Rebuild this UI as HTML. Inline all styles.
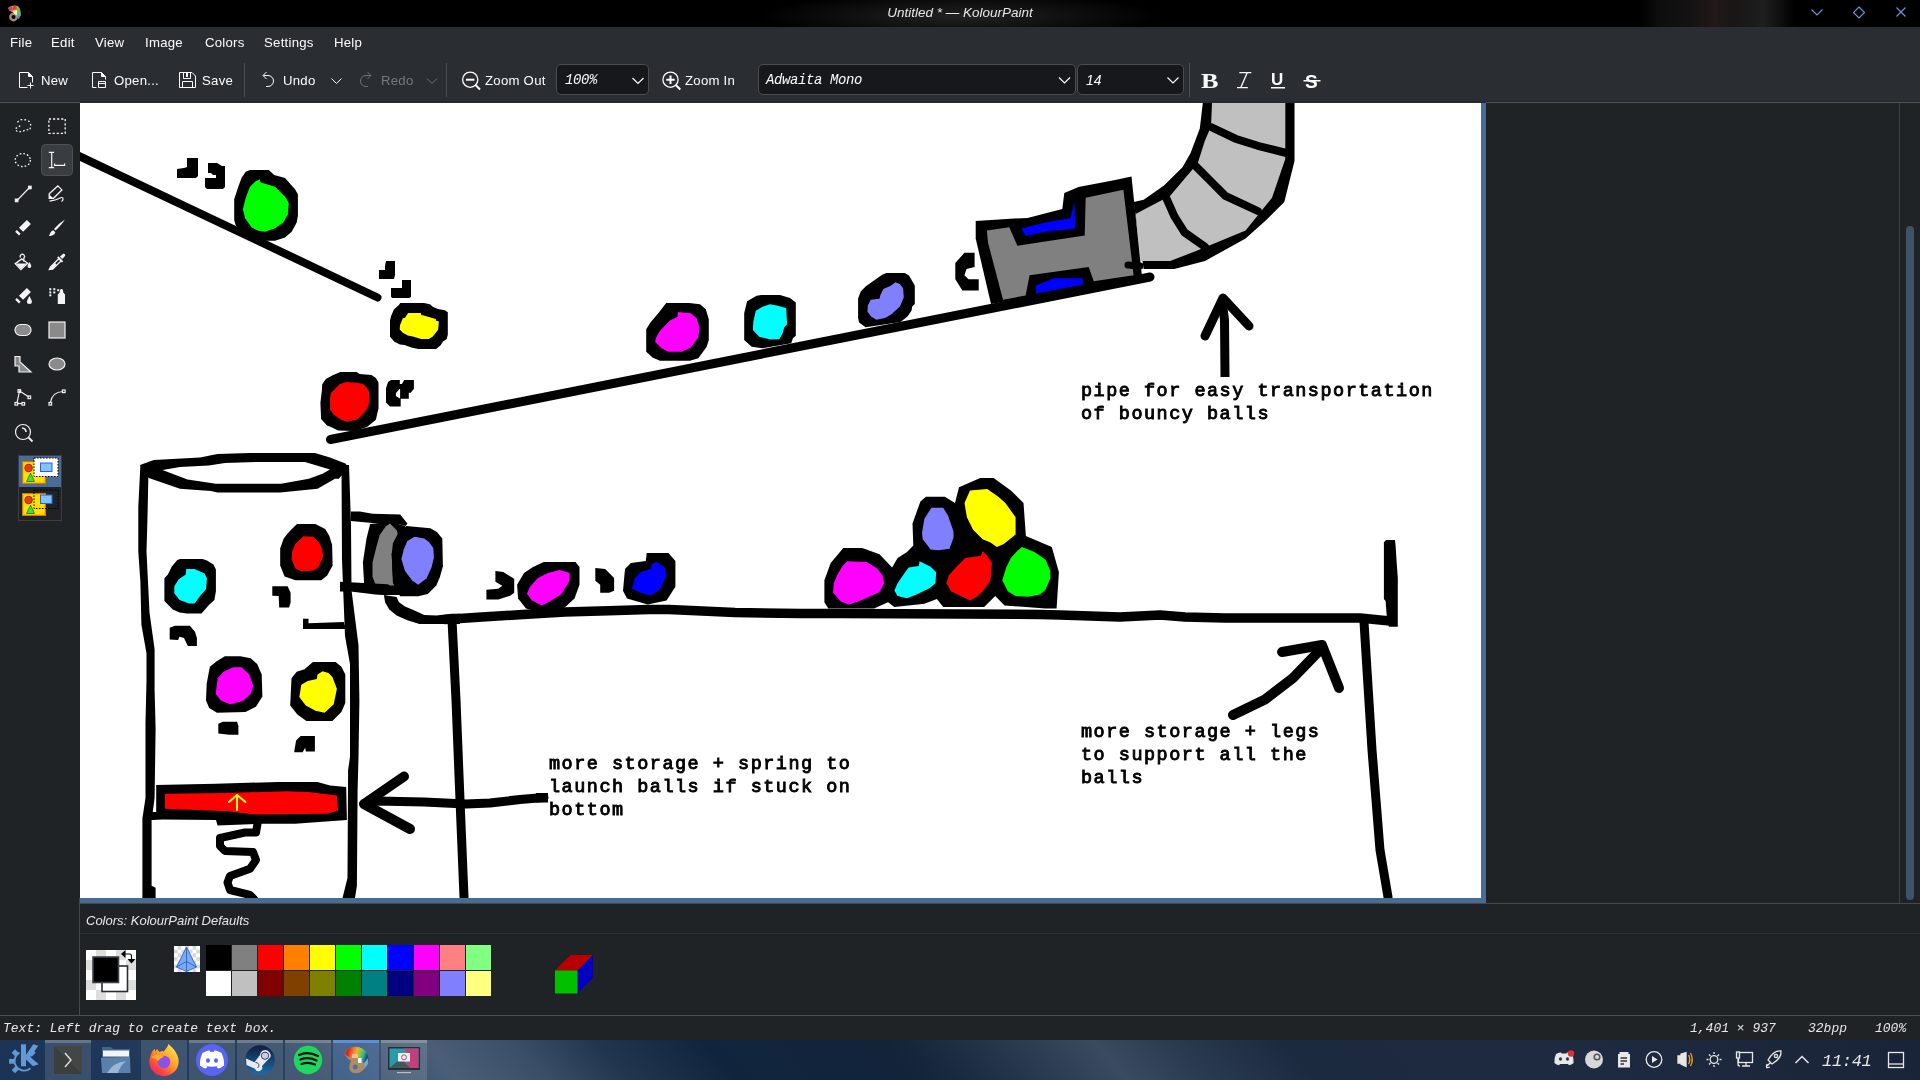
<!DOCTYPE html>
<html><head><meta charset="utf-8">
<style>
*{margin:0;padding:0;box-sizing:border-box}
html,body{width:1920px;height:1080px;overflow:hidden;background:#202326;font-family:"Liberation Sans",sans-serif;color:#fcfcfc}
.a{position:absolute}
.t{position:absolute;white-space:nowrap;font-size:14px;line-height:16px;will-change:transform}
#title{left:0;top:0;width:1920px;height:27px;background:#000}
#menu{left:0;top:27px;width:1920px;height:30px;background:#2a2e32}
#tool{left:0;top:57px;width:1920px;height:45px;background:#2a2e32;border-bottom:1px solid #25282c}
.combo{position:absolute;background:#17181b;border:1px solid #494d52;border-radius:5px}
.sep{position:absolute;width:1px;background:#4a4e52}
</style></head><body>
<div id="title" class="a">
  <div class="a" style="left:760px;top:0;width:400px;height:27px;background:radial-gradient(ellipse 50% 90% at 50% 60%,#222 0%,#111 50%,#000 100%)"></div>
  <div class="t" style="left:0;width:1920px;text-align:center;top:5px;font-style:italic;font-size:13.5px;color:#e6e6e6">Untitled * — KolourPaint</div>
</div>
<div id="menu" class="a">
  <div class="t" style="left:10px;top:8px;font-size:13.2px;letter-spacing:0.25px">File</div>
  <div class="t" style="left:51px;top:8px;font-size:13.2px;letter-spacing:0.25px">Edit</div>
  <div class="t" style="left:95px;top:8px;font-size:13.2px;letter-spacing:0.25px">View</div>
  <div class="t" style="left:145px;top:8px;font-size:13.2px;letter-spacing:0.25px">Image</div>
  <div class="t" style="left:205px;top:8px;font-size:13.2px;letter-spacing:0.25px">Colors</div>
  <div class="t" style="left:264px;top:8px;font-size:13.2px;letter-spacing:0.25px">Settings</div>
  <div class="t" style="left:334px;top:8px;font-size:13.2px;letter-spacing:0.25px">Help</div>
</div>
<div id="tool" class="a">
  <div class="t" style="left:41px;top:16px;font-size:13.2px;letter-spacing:0.25px">New</div>
  <div class="t" style="left:114px;top:16px;font-size:13.2px;letter-spacing:0.25px">Open...</div>
  <div class="t" style="left:202px;top:16px;font-size:13.2px;letter-spacing:0.25px">Save</div>
  <div class="sep" style="left:244px;top:6px;height:34px"></div>
  <div class="t" style="left:283px;top:16px;font-size:13.2px;letter-spacing:0.25px">Undo</div>
  <div class="t" style="left:381px;top:16px;font-size:13.2px;letter-spacing:0.25px;color:#75787c">Redo</div>
  <div class="sep" style="left:446px;top:6px;height:34px"></div>
  <div class="t" style="left:485px;top:16px;font-size:13.2px;letter-spacing:0.25px">Zoom Out</div>
  <div class="combo" style="left:556px;top:7px;width:93px;height:31px"></div>
  <div class="t" style="left:685px;top:16px;font-size:13.2px;letter-spacing:0.25px">Zoom In</div>
  <div class="combo" style="left:758px;top:7px;width:318px;height:31px"></div>
  <div class="combo" style="left:1077px;top:7px;width:107px;height:31px"></div>
  <div class="sep" style="left:1189px;top:6px;height:34px"></div>
  <div class="t" style="left:565px;top:15px;font-family:'Liberation Mono',monospace;font-style:italic;font-size:14px;letter-spacing:-0.4px">100%</div>
  <div class="t" style="left:766px;top:15px;font-family:'Liberation Mono',monospace;font-style:italic;font-size:14px;letter-spacing:-0.4px">Adwaita Mono</div>
  <div class="t" style="left:1086px;top:15px;font-style:italic;font-size:14px">14</div>
</div>
<div class="a" style="left:0;top:102px;width:80px;height:1px;background:#4f5358"></div>
<div class="a" style="left:80px;top:102px;width:1406px;height:1px;background:#26292d"></div>
<div class="a" style="left:1486px;top:102px;width:434px;height:1px;background:#4f5358"></div>
<!-- left tool panel -->
<div class="a" style="left:0;top:103px;width:80px;height:800px;background:#202326"></div>
<!-- canvas -->
<div class="a" style="left:80px;top:103px;width:1401px;height:795px;background:#fff;overflow:hidden"></div>
<svg class="a" style="left:0;top:0;will-change:transform" width="1920" height="1080" viewBox="0 0 1920 1080"><defs><clipPath id="cv"><rect x="80" y="103" width="1401" height="795"/></clipPath></defs><g clip-path="url(#cv)"><polyline points="78.0,155.5 377.5,297.5" fill="none" stroke="#000" stroke-width="8" stroke-linecap="round" stroke-linejoin="round"/>
<polygon points="187.0,158.0 198.0,158.0 198.0,176.0 196.0,178.0 177.0,178.0 177.0,169.0 184.0,168.0 187.0,167.0" fill="#000" />
<polygon points="208.0,163.0 217.0,163.0 222.0,166.0 225.0,166.0 225.0,187.0 223.0,189.0 207.0,189.0 205.0,187.0 205.0,178.0 216.0,178.0 216.0,175.0 213.0,175.0 211.0,173.0 208.0,173.0" fill="#000" />
<polygon points="250.0,170.0 268.8,170.0 274.2,175.0 285.0,177.9 295.0,189.2 297.9,194.2 297.9,215.8 296.7,222.5 291.7,231.7 285.0,237.5 275.0,240.8 260.0,240.8 250.0,237.5 235.8,225.8 234.2,220.0 234.2,199.2 238.3,186.7 241.7,177.5 245.8,171.7" fill="#000" />
<polygon points="259.6,179.2 260.8,182.5 275.0,186.7 285.8,197.5 288.8,203.3 287.9,214.2 283.3,222.5 275.0,228.3 265.0,231.7 258.3,230.8 251.7,227.5 245.0,218.3 242.9,209.2 245.8,197.5 250.0,186.7 255.0,181.7" fill="#00ff00" />
<polygon points="386.0,261.0 395.0,261.0 395.0,275.0 394.0,279.0 379.0,279.0 379.0,270.0 385.0,270.0 385.0,266.0" fill="#000" />
<polygon points="402.0,280.0 411.0,280.0 411.0,297.0 409.0,298.0 392.0,298.0 391.0,296.5 391.0,288.0 402.0,288.0" fill="#000" />
<polygon points="400.3,303.1 423.9,303.1 430.0,304.2 432.8,306.7 437.8,308.9 445.0,310.3 447.8,312.2 447.8,334.7 446.7,338.9 442.8,341.7 440.6,345.3 436.1,348.9 418.3,348.9 412.2,347.8 404.4,345.0 400.0,344.4 394.4,341.7 390.0,336.7 390.0,320.6 391.1,316.1 393.9,309.4 398.9,305.0" fill="#000" />
<polygon points="408.1,313.1 420.8,313.1 421.1,314.7 435.8,318.9 436.1,320.8 438.9,321.4 438.1,329.7 432.8,336.4 428.9,338.9 421.1,338.9 412.8,336.4 407.8,335.6 402.8,332.8 399.7,329.4 400.0,325.3 402.8,318.3 405.0,317.8" fill="#ffff00" />
<polyline points="330.5,439.5 1150.0,277.0" fill="none" stroke="#000" stroke-width="9" stroke-linecap="round" stroke-linejoin="round"/>
<polygon points="340.4,372.0 356.7,372.0 359.6,373.9 371.5,375.0 375.9,378.0 378.5,382.4 378.5,408.7 377.4,413.1 375.9,419.8 372.2,422.8 367.0,426.9 354.4,430.9 338.1,430.6 331.5,427.2 327.0,425.4 321.1,419.1 320.4,402.8 321.9,390.2 322.2,384.3 325.9,379.1 332.2,375.4" fill="#000" />
<polygon points="346.3,382.0 356.7,382.8 363.0,383.9 366.3,386.9 368.9,390.9 369.6,399.8 368.1,406.9 364.4,412.4 357.4,419.4 347.0,421.7 341.1,419.8 333.7,414.6 330.0,409.4 330.0,398.3 331.1,392.8 336.7,387.2 339.6,384.3" fill="#ff0000" />
<path fill-rule="evenodd" d="M391.2,380 L399.8,380 L399.8,383.9 L402,383.9 L404.1,380 L413.9,380 L413.9,388.8 L410.8,392.7 L408.8,392.7 L408.8,398.8 L400.7,398.8 L400.7,406.6 L390,406.6 L386,402.6 L386,388.3 L388,382.1 Z M399.4,388.9 L395.9,393.2 L395.9,396.1 L399.4,398.2 L400.1,398.2 L400.1,388.9 Z" fill="#000"/>
<polygon points="666.2,302.9 689.2,302.9 700.0,304.2 705.8,309.2 708.8,319.2 708.8,340.0 706.7,346.7 698.3,358.3 690.0,360.8 660.0,360.8 652.5,357.5 646.2,351.7 646.2,329.2 650.4,322.5 658.3,313.3 663.3,306.7" fill="#000" />
<polygon points="677.9,312.1 690.8,313.3 696.7,318.3 699.6,328.3 698.3,337.5 690.8,347.5 681.7,351.7 668.3,351.7 661.7,348.3 655.0,341.7 656.2,337.5 660.0,330.8 670.0,320.4 677.5,316.7" fill="#ff00ff" />
<polygon points="761.2,295.0 780.0,295.0 790.0,297.9 795.8,302.5 795.8,335.8 792.9,338.3 791.2,343.3 762.5,348.3 751.7,346.7 744.2,340.0 744.2,313.3 747.1,301.2 756.7,295.8" fill="#000" />
<polygon points="770.0,304.2 776.7,305.4 786.2,307.9 787.1,324.2 784.2,327.5 782.5,333.8 779.2,339.2 770.8,339.6 759.2,336.7 752.9,330.0 753.3,321.7 755.8,310.8 762.5,306.7" fill="#00ffff" />
<polygon points="886.3,273.1 904.8,273.1 909.0,275.4 911.9,280.6 914.8,285.4 914.8,303.9 912.2,306.5 911.6,310.4 907.7,316.2 901.2,321.4 900.6,322.0 865.6,327.2 859.1,322.4 858.1,318.1 858.1,298.4 860.7,291.6 865.6,286.4 873.3,280.9 881.8,275.0" fill="#000" />
<polygon points="895.4,282.2 899.9,284.1 903.1,288.3 903.8,297.4 899.9,306.5 891.5,314.3 885.0,318.1 876.6,319.8 871.4,316.8 867.5,311.7 867.8,305.8 870.7,299.7 879.5,298.7 880.5,294.8 883.4,289.0 890.8,285.7" fill="#8080ff" />
<polygon points="964.4,252.8 974.6,252.8 974.6,267.1 966.5,269.1 964.4,275.2 968.5,279.3 978.7,279.3 978.7,290.5 962.4,290.5 955.3,279.3 955.3,263.0" fill="#000" />
<polygon points="1202.8,103.0 1199.8,128.5 1190.6,153.0 1182.5,167.2 1164.0,185.6 1143.7,199.8 1133.6,202.0 1143.7,269.0 1174.3,269.0 1205.0,261.0 1245.6,238.5 1266.0,220.2 1284.3,201.9 1294.5,161.0 1294.5,103.0" fill="#000" />
<polygon points="1212.0,103.0 1211.0,126.5 1204.9,140.7 1197.7,163.2 1170.2,195.8 1135.6,214.0 1140.7,261.0 1170.2,261.0 1196.7,250.8 1245.6,230.4 1272.0,197.8 1285.3,159.0 1285.3,103.0" fill="#c0c0c0" />
<polyline points="1212.0,127.5 1235.4,138.7 1257.8,145.8 1286.4,153.0" fill="none" stroke="#000" stroke-width="8" stroke-linecap="round" stroke-linejoin="round"/>
<polyline points="1194.7,165.2 1211.0,181.5 1225.3,195.8 1257.8,211.0" fill="none" stroke="#000" stroke-width="8" stroke-linecap="round" stroke-linejoin="round"/>
<polyline points="1166.2,197.8 1174.3,216.1 1184.5,232.4 1204.9,246.7" fill="none" stroke="#000" stroke-width="8" stroke-linecap="round" stroke-linejoin="round"/>
<polygon points="975.7,221.0 1014.4,218.5 1027.6,218.0 1062.3,209.0 1064.3,193.0 1078.5,187.0 1115.2,180.0 1131.5,176.5 1142.0,277.0 991.0,304.0 975.7,238.5" fill="#000" />
<polygon points="986.9,230.4 1009.3,227.3 1017.4,245.7 1084.7,235.5 1085.7,197.8 1123.4,189.7 1133.6,275.2 1093.8,281.3 1088.7,267.0 1029.6,275.2 1025.6,295.6 1003.0,299.7 988.0,242.6" fill="#808080" />
<polygon points="1021.5,228.4 1046.0,222.2 1070.4,218.2 1074.5,201.9 1075.5,228.4 1046.0,231.4 1025.6,236.1" fill="#0000ff" />
<polygon points="1035.8,285.4 1054.0,278.3 1082.6,278.3 1083.6,284.4 1035.8,293.6" fill="#0000ff" />
<polyline points="1128.0,265.0 1140.0,266.0" fill="none" stroke="#000" stroke-width="7" stroke-linecap="round" stroke-linejoin="round"/>
<path d="M1225,377 L1224.5,320 L1222,300" fill="none" stroke="#000" stroke-width="9"/>
<polyline points="1205.0,336.0 1223.0,298.0 1249.0,326.0" fill="none" stroke="#000" stroke-width="9" stroke-linecap="round" stroke-linejoin="round"/>
<polygon points="140.0,465.0 153.8,460.0 200.0,457.5 217.5,454.0 249.4,453.0 315.0,453.0 330.0,457.5 346.0,463.8 347.5,468.8 338.8,478.8 335.0,478.8 317.5,488.8 280.0,492.5 217.5,492.5 211.0,491.0 180.0,488.8 148.8,478.0" fill="#000" />
<polygon points="162.5,470.0 180.0,466.9 208.8,465.6 225.0,463.0 257.5,462.0 305.0,462.0 330.0,469.4 322.5,473.8 308.8,478.8 281.2,483.8 216.0,483.8 187.5,479.4" fill="#fff" />
<polygon points="140.4,465.0 148.5,470.0 147.5,516.8 146.5,551.5 149.5,612.6 154.6,649.2 154.6,690.0 155.6,728.9 154.6,798.0 151.6,820.5 151.6,885.7 155.6,887.7 155.6,898.0 142.4,898.0 142.4,818.5 145.5,798.0 145.5,722.8 146.5,680.0 146.5,653.3 141.4,624.8 140.4,582.0 138.3,551.5 138.3,506.7" fill="#000" />
<polygon points="341.5,465.0 342.0,560.0 345.0,636.0 350.0,664.0 350.0,756.7 348.1,770.0 347.5,878.0 342.5,898.0 355.0,898.0 356.9,886.0 357.6,790.0 358.5,756.7 359.4,701.0 358.5,645.5 351.5,590.0 351.0,525.0 349.0,465.0" fill="#000" />
<polygon points="297.0,523.9 315.3,523.9 325.2,528.9 329.2,535.8 332.1,544.7 332.6,565.5 327.2,575.4 321.3,580.3 295.5,580.3 284.6,576.4 280.2,565.5 280.2,548.6 283.6,538.8 286.6,534.8 291.1,529.8" fill="#000" />
<polygon points="303.4,536.3 313.3,536.8 319.3,542.7 322.2,549.6 323.2,556.6 318.3,567.4 313.3,570.4 301.5,571.4 295.5,568.4 291.6,559.5 292.1,551.6 295.5,543.7" fill="#ff0000" />
<polygon points="180.2,559.0 202.5,559.0 207.0,560.5 213.4,564.5 215.9,569.4 215.9,591.2 214.4,600.1 208.9,605.1 201.5,613.5 186.7,613.5 179.7,612.5 172.8,609.5 164.4,601.1 164.4,578.3 167.9,574.4 171.8,566.5 177.3,560.0" fill="#000" />
<polygon points="186.2,568.9 194.6,568.9 204.5,573.4 207.0,578.3 206.0,589.2 200.0,596.1 194.6,603.6 189.1,603.6 179.7,600.1 174.3,593.2 174.3,586.3 178.8,579.3 185.7,574.4" fill="#00ffff" />
<polygon points="272.3,586.3 287.6,586.3 290.6,592.7 290.6,602.6 289.1,607.5 279.2,607.5 278.7,596.1 272.3,595.7" fill="#000" />
<polygon points="224.8,656.3 240.4,656.3 250.7,658.2 257.2,664.1 261.7,674.4 262.4,696.5 255.9,706.8 245.5,712.0 217.0,712.7 209.2,708.1 206.0,700.4 206.7,683.5 209.9,666.7 216.4,661.5" fill="#000" />
<polygon points="233.2,667.3 241.6,667.3 249.4,674.4 253.3,686.1 250.7,693.9 242.9,701.0 230.0,704.2 220.9,700.4 215.7,693.9 217.7,678.3 223.5,671.8" fill="#ff00ff" />
<polygon points="312.9,662.1 335.6,662.1 341.4,666.7 345.3,674.4 345.3,702.9 341.4,712.0 332.4,721.1 306.4,721.1 297.4,714.6 290.2,705.5 291.5,678.3 296.7,671.8 304.5,669.2" fill="#000" />
<polygon points="322.6,671.2 328.5,673.1 332.4,677.0 336.9,688.7 333.7,704.2 324.6,712.7 315.5,710.7 305.8,705.5 299.3,697.1 301.3,684.8 307.7,680.9 316.8,679.0 317.5,674.4" fill="#ffff00" />
<polygon points="169.7,627.8 174.9,625.8 189.8,625.8 195.0,631.7 196.9,638.1 196.9,645.9 187.9,645.9 184.0,638.1 179.4,636.8 178.1,640.1 169.7,639.4" fill="#000" />
<polygon points="218.3,723.7 222.9,721.7 237.1,721.7 238.4,726.3 238.4,734.7 229.3,734.7 218.3,733.4" fill="#000" />
<polygon points="294.1,752.2 296.1,740.5 300.6,736.0 314.9,736.0 314.9,751.5 305.8,751.5 305.2,747.7 302.6,752.2" fill="#000" />
<polygon points="303.0,618.7 308.5,618.7 308.5,623.3 343.7,622.0 346.0,629.0 303.0,629.0" fill="#000" />
<polygon points="156.2,785.0 180.0,784.4 216.0,783.8 277.5,781.9 317.5,781.9 330.0,785.6 346.2,786.9 346.9,820.0 295.0,823.8 262.5,823.8 217.5,825.6 216.0,820.0 162.5,819.4 152.5,820.0 145.0,820.0 145.0,812.0 156.2,812.0" fill="#000" />
<polygon points="165.0,793.8 225.0,793.0 286.2,791.2 308.8,791.9 336.9,795.6 338.1,810.6 327.5,813.8 255.0,814.4 227.5,811.2 165.0,808.8" fill="#ff0000" />
<polyline points="229.0,802.0 237.0,795.0 245.5,802.0" fill="none" stroke="#ffff00" stroke-width="2" stroke-linecap="round" stroke-linejoin="round"/>
<polyline points="237.0,796.0 237.0,810.0" fill="none" stroke="#ffff00" stroke-width="2" stroke-linecap="round" stroke-linejoin="round"/>
<polyline points="257.5,823.8 256.0,832.5 245.0,832.5 220.0,838.0 220.0,846.0 225.0,851.0 253.0,852.0 256.0,860.0 250.0,868.8 230.0,876.0 227.5,882.5 230.0,890.0 250.0,895.0 254.0,899.0" fill="none" stroke="#000" stroke-width="8" stroke-linecap="round" stroke-linejoin="round"/>
<polygon points="350.8,511.4 359.9,511.4 372.5,513.8 400.2,514.4 407.4,523.5 405.6,525.9 397.8,524.1 372.5,522.9 350.8,521.1" fill="#000" />
<polygon points="370.1,524.1 390.5,521.7 405.0,525.9 407.4,536.1 405.0,595.1 385.7,595.1 371.3,593.9 364.1,583.0 362.9,562.6 366.5,538.5" fill="#000" />
<polygon points="389.9,523.5 396.6,530.1 397.8,533.7 392.9,543.3 391.7,554.2 392.9,577.0 397.8,585.4 376.1,585.4 372.5,577.0 372.5,562.6 376.1,548.1 379.7,534.9 385.7,526.5" fill="#808080" />
<polygon points="406.2,525.9 430.3,528.3 436.9,531.9 442.3,538.5 442.9,566.2 439.9,577.0 436.3,585.4 427.8,593.9 418.2,596.3 400.2,596.3 392.9,583.0 391.7,554.2 397.8,534.9" fill="#000" />
<polygon points="414.6,536.7 424.2,538.5 429.0,542.1 433.3,548.1 433.9,557.8 431.5,567.4 426.6,578.2 418.2,584.8 412.2,580.6 405.0,571.0 401.4,559.0 403.8,549.3 407.4,540.9" fill="#8080ff" />
<polygon points="340.0,581.8 364.1,583.0 388.1,584.2 400.2,595.1 385.7,595.1 371.3,593.9 350.8,591.5 340.0,591.5" fill="#000" />
<polygon points="383.9,595.1 396.6,596.9 399.0,602.3 405.0,606.5 413.4,610.1 424.2,614.9 436.3,615.5 451.9,613.7 460.0,613.7 460.0,623.9 419.4,623.9 407.4,620.3 396.6,615.5 389.3,609.5 385.1,602.3" fill="#000" />
<polyline points="445.0,619.5 482.0,617.0 523.0,614.5 565.0,612.0 617.0,610.5 648.0,609.5 669.0,609.5 735.0,612.5 800.0,613.5 840.0,613.5 957.0,614.0 1040.0,614.5 1060.0,615.0 1120.0,617.0 1160.0,615.0 1185.0,617.0 1225.0,618.0 1360.0,618.0 1390.0,621.0" fill="none" stroke="#000" stroke-width="9.5" stroke-linecap="round" stroke-linejoin="round"/>
<polygon points="1386.1,540.0 1395.0,540.0 1395.6,546.0 1396.7,562.8 1397.8,577.8 1397.8,626.7 1388.9,626.7 1386.7,615.6 1385.6,601.0 1383.9,599.0 1383.9,542.2" fill="#000" />
<polyline points="1364.0,622.0 1372.0,750.0 1380.0,850.0 1388.0,897.0" fill="none" stroke="#000" stroke-width="9" stroke-linecap="round" stroke-linejoin="round"/>
<polyline points="452.0,620.0 456.0,700.0 460.0,800.0 464.0,897.0" fill="none" stroke="#000" stroke-width="9" stroke-linecap="round" stroke-linejoin="round"/>
<polygon points="495.4,570.9 503.3,571.9 514.2,578.8 514.2,592.7 510.2,595.7 498.3,599.6 486.4,599.6 486.4,589.7 498.3,588.7 502.3,585.8 495.4,581.8" fill="#000" />
<polygon points="595.3,568.0 605.2,569.0 614.1,577.9 614.1,590.7 609.1,592.7 600.2,592.7 600.2,584.8 595.3,580.8" fill="#000" />
<polygon points="543.8,562.0 575.5,562.0 579.5,567.0 579.5,584.8 574.5,598.6 563.6,608.5 537.9,611.5 526.0,608.5 518.1,598.6 517.1,584.8 524.0,572.9 533.0,567.0" fill="#000" />
<polygon points="559.7,569.9 569.6,572.9 569.6,580.8 561.7,593.7 549.8,601.6 541.9,605.6 532.0,600.6 527.0,593.7 530.0,586.8 537.9,577.9 547.8,572.9" fill="#ff00ff" />
<polygon points="646.7,553.1 668.5,553.1 675.4,561.0 675.4,586.8 666.5,600.6 647.7,604.6 627.0,598.6 623.0,590.7 625.0,569.0 630.9,563.0 645.8,561.0" fill="#000" />
<polygon points="656.6,562.0 664.6,567.0 666.5,574.9 660.6,588.7 650.7,595.7 640.8,592.7 631.9,588.7 634.9,577.9 640.8,571.9 650.7,569.0 651.7,564.0" fill="#0000ff" />
<polygon points="824.4,580.2 830.7,562.9 843.3,547.9 862.2,547.9 879.5,554.2 892.1,567.6 897.6,558.1 907.0,551.9 913.3,545.6 912.5,523.5 920.4,501.5 925.9,496.8 944.8,496.8 955.0,503.1 959.0,487.3 980.2,477.9 993.6,477.9 1010.9,490.5 1023.5,503.1 1025.9,536.1 1051.8,547.1 1058.9,572.3 1056.6,608.5 1045.6,608.5 1004.6,605.4 995.2,595.9 984.2,606.9 943.2,606.9 936.9,599.1 924.4,603.8 894.4,606.9 888.1,602.2 874.0,608.5 828.3,608.5 824.4,602.2" fill="#000" />
<polygon points="847.2,561.3 866.9,562.1 877.1,568.4 882.6,575.5 884.2,583.3 879.5,592.0 869.3,596.7 858.2,601.4 848.8,604.6 840.9,601.4 833.1,592.8 833.8,583.3 837.8,573.9 842.5,566.0" fill="#ff00ff" />
<polygon points="919.6,561.3 930.6,566.8 936.2,572.3 935.4,583.3 929.9,588.1 916.5,594.4 907.0,598.3 897.6,595.9 894.4,590.4 897.6,583.3 903.9,573.9 908.6,567.6 918.8,566.0" fill="#00ffff" />
<polygon points="982.6,551.1 987.3,555.8 992.0,562.9 990.5,580.2 984.2,589.6 977.9,595.9 970.0,600.6 960.6,595.9 951.1,591.2 946.4,583.3 948.7,575.5 955.8,567.6 965.3,558.1 981.0,555.8" fill="#ff0000" />
<polygon points="1021.9,547.1 1034.5,551.9 1045.6,559.7 1050.3,570.7 1050.3,578.6 1045.6,589.6 1040.0,594.4 1028.2,596.7 1015.6,595.9 1007.8,591.2 1002.3,580.2 1006.2,567.6 1010.9,558.1 1017.2,551.1" fill="#00ff00" />
<polygon points="931.4,507.8 943.2,507.8 948.0,515.6 953.5,531.4 953.5,537.7 949.5,548.7 938.5,550.3 930.6,549.5 922.8,539.3 922.0,533.0 924.4,518.8" fill="#8080ff" />
<polygon points="970.0,490.5 987.3,488.9 998.3,496.8 1005.4,503.1 1015.6,517.2 1015.6,534.5 1007.8,540.8 1003.8,544.0 996.8,547.1 990.5,542.4 982.6,539.3 973.1,529.8 966.9,517.2 964.5,503.1" fill="#ffff00" />
<polyline points="544.0,797.5 520.0,799.5 490.0,803.0 466.0,804.0 424.0,802.0 377.0,801.0 364.0,803.5" fill="none" stroke="#000" stroke-width="9" stroke-linecap="round" stroke-linejoin="round"/>
<polygon points="536.0,793.0 548.0,793.0 548.0,802.5 536.0,802.5" fill="#000" />
<polyline points="404.0,776.5 364.0,804.0 410.0,829.0" fill="none" stroke="#000" stroke-width="10" stroke-linecap="round" stroke-linejoin="round"/>
<polyline points="1233.0,715.0 1265.0,699.5 1293.0,678.0 1322.0,648.0" fill="none" stroke="#000" stroke-width="10" stroke-linecap="round" stroke-linejoin="round"/>
<polyline points="1282.0,652.0 1322.0,645.0 1339.0,688.0" fill="none" stroke="#000" stroke-width="10" stroke-linecap="round" stroke-linejoin="round"/>
<text x="1081" y="396" font-family="Liberation Mono" font-size="18.5" letter-spacing="1.5" fill="#000" stroke="#000" stroke-width="0.9"><tspan x="1081" y="396" xml:space="preserve">pipe for easy transportation</tspan><tspan x="1081" y="419" xml:space="preserve">of bouncy balls</tspan></text>
<text x="549" y="769" font-family="Liberation Mono" font-size="18.5" letter-spacing="1.5" fill="#000" stroke="#000" stroke-width="0.9"><tspan x="549" y="769" xml:space="preserve">more storage + spring to</tspan><tspan x="549" y="792" xml:space="preserve">launch balls if stuck on</tspan><tspan x="549" y="815" xml:space="preserve">bottom</tspan></text>
<text x="1081" y="737.2" font-family="Liberation Mono" font-size="18.5" letter-spacing="1.5" fill="#000" stroke="#000" stroke-width="0.9"><tspan x="1081" y="737.2" xml:space="preserve">more storage + legs</tspan><tspan x="1081" y="760.2" xml:space="preserve">to support all the</tspan><tspan x="1081" y="783.2" xml:space="preserve">balls</tspan></text></g></svg>
<div class="a" style="left:1481px;top:103px;width:5px;height:800px;background:#4a6b95"></div>
<div class="a" style="left:80px;top:898px;width:1406px;height:5px;background:#4a6b95"></div>
<!-- right scrollbar -->
<div class="a" style="left:1899px;top:103px;width:1px;height:800px;background:#3c4045"></div>
<div class="a" style="left:1906px;top:226px;width:8px;height:674px;background:#3e5268;border-radius:4px"></div>
<!-- panel lines -->
<div class="a" style="left:80px;top:903px;width:1840px;height:1px;background:#45494e"></div>
<div class="a" style="left:79px;top:898px;width:1px;height:117px;background:#45494e"></div>
<div class="a" style="left:80px;top:933px;width:1840px;height:1px;background:#2e3236"></div>
<div class="t" style="left:86px;top:913px;font-style:italic;font-size:13px;color:#e8e8e8">Colors: KolourPaint Defaults</div>
<div class="a" style="left:0;top:1015px;width:1920px;height:1px;background:#4b4f54"></div>
<!-- status -->
<div class="t" style="left:3px;top:1021px;font-family:'Liberation Mono',monospace;font-style:italic;font-size:13px;color:#e8e8e8">Text: Left drag to create text box.</div>
<div class="t" style="left:1690px;top:1021px;font-family:'Liberation Mono',monospace;font-style:italic;font-size:13px;color:#e8e8e8">1,401 × 937</div>
<div class="t" style="left:1808px;top:1021px;font-family:'Liberation Mono',monospace;font-style:italic;font-size:13px;color:#e8e8e8">32bpp</div>
<div class="t" style="left:1875px;top:1021px;font-family:'Liberation Mono',monospace;font-style:italic;font-size:13px;color:#e8e8e8">100%</div>
<!-- taskbar -->
<div class="a" style="left:0;top:1040px;width:1920px;height:40px;background:linear-gradient(49deg,#1b3354 13px,#1e3658 89px,#2a4260 240px,#4a5e78 345px,#3a4e68 413px,#22364f 473px,#10253d 557px,#12233a 692px,#1c2c42 738px,#2e3e55 806px,#3a4a60 851px,#2a3a50 911px,#1c2a40 994px,#1e2a40 1221px,#1a2438 1462px)"></div>
<svg class="a" style="left:0;top:0;will-change:transform" width="1920" height="1080" viewBox="0 0 1920 1080">
<defs>
 <radialGradient id="tglow" cx="0.5" cy="0.5" r="0.5"><stop offset="0" stop-color="#1c1c1c"/><stop offset="1" stop-color="#000" stop-opacity="0"/></radialGradient>
 <linearGradient id="tglow2" x1="0" y1="0" x2="1" y2="0"><stop offset="0" stop-color="#000"/><stop offset="0.12" stop-color="#0d0d0d"/><stop offset="0.3" stop-color="#121212"/><stop offset="0.48" stop-color="#221818"/><stop offset="0.62" stop-color="#181616"/><stop offset="0.8" stop-color="#1e1e1e"/><stop offset="0.92" stop-color="#0c0c0c"/><stop offset="1" stop-color="#000"/></linearGradient>
</defs>
<!-- title glow -->
<rect x="1640" y="0" width="155" height="27" fill="url(#tglow2)"/>
<!-- app icon -->
<g transform="translate(7,4)">
 <circle cx="6.5" cy="13" r="3.2" fill="none" stroke="#b08a66" stroke-width="2.4"/>
 <path d="M1,4 Q5,0.5 11,2 Q14,5 13.5,12 L11,14 Q9,11 7,9 L3,7 Z" fill="#e88a3a"/>
 <path d="M1.5,4 L5,2.5 L6,6 L2,7 Z" fill="#c03ca0"/>
 <path d="M6,2 L9,1.5 L10,5 L6,6 Z" fill="#d84c1c"/>
 <path d="M9.5,3 L13,5 L13.5,9 L10,8 Z" fill="#6ac040"/>
 <path d="M10,8 L13.5,9 L13.5,12 L10,11 Z" fill="#40b8c8"/>
 <path d="M6,7 L10,6 L10,11 L7,10 Z" fill="#f0f0d0"/>
 <path d="M11,12 L13.5,11 L12,15 L10,14 Z" fill="#5a8ad0"/>
</g>
<!-- window controls -->
<g fill="none" stroke="#6a9cd8" stroke-width="1.1">
 <path d="M1811.5,9.5 L1817,15 L1822.5,9.5"/>
 <path d="M1859,7 L1864.5,12.5 L1859,18 L1853.5,12.5 Z"/>
 <path d="M1896.5,7.5 L1905.5,16.5 M1905.5,7.5 L1896.5,16.5"/>
</g>
<!-- toolbar icons -->
<g fill="none" stroke="#fcfcfc" stroke-width="1">
 <!-- new -->
 <path d="M19.5,72.5 H28.5 L32.5,76.5 V82.5 M27.5,87.5 H19.5 V72.5"/>
 <path d="M28.5,72.5 V76.5 H32.5" fill="#fcfcfc"/>
 <path d="M30.5,82.5 V88.5 M27.5,85.5 H33.5"/>
 <!-- open -->
 <path d="M92.5,72.5 H101.5 L105.5,76.5 V79.5 M96.5,87.5 H92.5 V72.5"/>
 <path d="M101.5,72.5 V76.5 H105.5" fill="#fcfcfc"/>
 <path d="M98.5,81.5 H105.5 V87.5 H98.5 Z M98.5,83.5 H105.5"/>
 <!-- save -->
 <path d="M179.5,72.5 H192 L195.5,76 V87.5 H179.5 Z"/>
 <path d="M183.5,72.5 V78.5 H190.5 V72.5 M182.5,87.5 V81.5 H192.5 V87.5"/>
 <rect x="186" y="73" width="2" height="4" fill="#fcfcfc" stroke="none"/>
 <!-- undo -->
 <path d="M263,75.5 L266.5,72 M263,75.5 L266.5,79 M263.5,75.5 H268 A5.5,5.5 0 0 1 268,86.5 H266"/>
 <path d="M331.5,78.5 L336.5,83.5 L341.5,78.5"/>
</g>
<g fill="none" stroke="#6e7175" stroke-width="1">
 <path d="M371,75.5 L367.5,72 M371,75.5 L367.5,79 M370.5,75.5 H366 A5.5,5.5 0 0 0 366,86.5 H368"/>
 <path d="M427,78.5 L432,83.5 L437,78.5"/>
</g>
<g fill="none" stroke="#fcfcfc" stroke-width="1.3">
 <circle cx="470.2" cy="79.7" r="7.6"/>
 <path d="M475.5,85 L480,89.5" stroke-width="2"/>
 <path d="M466,79.7 H474.4" stroke-width="2"/>
 <circle cx="670.5" cy="79.7" r="7.6"/>
 <path d="M675.8,85 L680.3,89.5" stroke-width="2"/>
 <path d="M666.3,79.7 H674.7 M670.5,75.5 V83.9" stroke-width="2"/>
 <path d="M632.5,78 L638,83.5 L643.5,78" stroke-width="1.2"/>
 <path d="M1059,77.5 L1064.5,83 L1070,77.5" stroke-width="1.2"/>
 <path d="M1167.5,77.5 L1173,83 L1178.5,77.5" stroke-width="1.2"/>
</g>
<!-- B I U S -->
<text x="1201" y="88" font-family="Liberation Serif" font-weight="bold" font-size="22" fill="#fcfcfc" textLength="17.5" lengthAdjust="spacingAndGlyphs">B</text>
<path d="M1237,87.6 H1247.8 M1239.3,72.6 H1251.3 M1247.2,72.8 L1240.8,87.4" stroke="#fcfcfc" stroke-width="1.3" fill="none"/>
<text x="1271" y="85" font-family="Liberation Sans" font-weight="bold" font-size="17" fill="#fcfcfc">U</text>
<rect x="1271" y="87" width="14" height="1.5" fill="#fcfcfc"/>
<text x="1305" y="88" font-family="Liberation Sans" font-weight="bold" font-size="19" fill="#fcfcfc">S</text>
<rect x="1303.5" y="80" width="17" height="1.5" fill="#fcfcfc"/>
</svg>

<svg class="a" style="left:0;top:0;will-change:transform" width="1920" height="1080" viewBox="0 0 1920 1080">
<!-- selected text tool bg -->
<rect x="41.5" y="144.5" width="31" height="31" rx="4" fill="#393c40" stroke="#4d5054"/>
<g fill="none" stroke="#f4f4f4" stroke-width="1.3">
 <path d="M17.5,122.3 Q19,120 21.9,119.7 L25.9,119.8 Q28.5,120.5 29.4,122 Q31,124 30.6,126 Q30.5,128.5 29.4,130.1 Q27.5,129.5 25.9,129.8 L21.9,131.7 L17.8,131.7 Q15.5,130.5 15.3,128.9 Q16.5,127.8 17.8,127.3 L20.5,125.5" stroke-dasharray="1.7 2.1"/>
 <rect x="48.9" y="119" width="16.3" height="14.3" stroke-dasharray="2.2 1.9"/>
 <ellipse cx="22.8" cy="160.1" rx="7.6" ry="6.5" stroke-dasharray="1.7 2"/>
 <path d="M48.8,152.4 H54.1 M51.7,152.4 V167.6 M48.8,167.6 H54.1 M54.6,163.6 V165.3 H64.6 V163.6" stroke-width="1.2"/>
 <path d="M17,200.5 L29.5,187.5" stroke-width="1.1"/>
 <rect x="15.2" y="199" width="2.8" height="2.8" fill="#f4f4f4" stroke-width="0.9"/>
 <rect x="28.4" y="186.1" width="2.8" height="2.8" fill="#f4f4f4" stroke-width="0.9"/>
 <!-- pen -->
 <path d="M49.2,198.3 V193.8 L57.8,185.9 L61.9,189.9 L53.5,198.3 Z" stroke-width="1.3"/>
 <path d="M49.5,201.2 Q56,200 59,198.5 Q63,196.3 63,199 Q63,200.5 61.5,201.4" stroke-width="1.2"/>
</g>
<g fill="#f4f4f4">
 <path d="M49.2,198.3 V194.5 L53.2,198.3 Z"/>
 <!-- eraser -->
 <polygon points="26.9,219.9 30.9,224 23.1,231.8 19,227.75"/>
 <polygon points="16.9,229.9 20.6,233.7 19,235.5 15.2,231.7"/>
 <!-- brush -->
 <path d="M64.9,219.6 Q62,224.5 55.5,230.6 L54,229.1 Q59.5,223 64.9,219.6 Z"/>
 <path d="M53.3,230.2 L55.3,232.2 Q55.2,234.5 52,235.5 Q50.5,236 49,236 Q50,233.5 50.7,232.3 Q51.5,230.6 53.3,230.2 Z"/>
 <!-- color eraser -->
 <polygon points="26.9,287.9 30.9,292 23.1,299.8 19,295.75"/>
 <polygon points="16.9,297.9 20.6,301.7 19,303.5 15.2,299.7"/>
 <path d="M29.4,296 Q31.9,300.5 31.9,301.5 A2.5,2.5 0 0 1 26.9,301.5 Q26.9,300.5 29.4,296 Z"/>
 <!-- spray -->
 <path d="M57.8,294.5 L59.6,292.5 L60.2,289.6 Q61.5,288.3 62.8,289.6 L63.3,292.5 L65,294.5 V303.9 H57.8 Z"/>
 <rect x="49.3" y="288.2" width="2" height="2"/><rect x="53.3" y="288.2" width="2" height="2"/><rect x="57.2" y="289.2" width="2" height="2"/>
 <rect x="49.3" y="291.4" width="2" height="2"/><rect x="53.3" y="291.4" width="2" height="2"/><rect x="49.3" y="294.3" width="2" height="2"/>
 <!-- drop for fill -->
 <path d="M29.4,262 Q31.3,265.3 31.3,266 A1.9,1.9 0 0 1 27.5,266 Q27.5,265.3 29.4,262 Z"/>
</g>
<g fill="none" stroke="#f4f4f4" stroke-width="1.3">
 <!-- fill bucket -->
 <polygon points="21.9,258.9 27.6,263.2 20.9,269.6 15.2,263.6"/>
 <path d="M20.5,257.6 A2.2,2.2 0 1 1 24,257.8 L23.5,261.5"/>
 <!-- eyedropper -->
 <path d="M49.3,269.5 L50.6,267 L59,258.5 L61.2,260.7 L52.7,269.2 Z"/>
 <path d="M57.8,257 L62.5,261.8" stroke-width="1.8"/>
</g>
<g fill="#f4f4f4">
 <polygon points="16,263.6 26.6,263.6 20.9,269 "/>
 <path d="M60,256.5 L63.5,253.5 Q65.5,253.8 65.2,255.8 L62.2,259 Z"/>
 <path d="M49.3,269.5 L50.6,267 L55,263 L56.5,264.5 L52.7,269.2 Z"/>
</g>
<g fill="none" stroke="#f0f0f0" stroke-width="1.2">
 <rect x="15" y="324.5" width="16" height="11" rx="5.5" fill="#8a8a8a"/>
 <rect x="49" y="322" width="16" height="16" fill="#8a8a8a"/>
 <path d="M15,356.5 H20 V362 L31,372 H19 V366 H15 Z" fill="#8a8a8a"/>
 <ellipse cx="57" cy="364" rx="8" ry="6" fill="#8a8a8a"/>
 <path d="M17,403 L19.5,391 L29,397"/>
 <rect x="18" y="389.7" width="2.6" height="2.6"/><rect x="28" y="396" width="2.6" height="2.6"/>
 <rect x="15" y="402.5" width="2.6" height="2.6"/><rect x="22" y="402.5" width="2.6" height="2.6"/>
 <path d="M17,403.5 H22"/>
 <path d="M50.5,402.5 Q52,392 63,391.5"/>
 <rect x="49" y="402.5" width="2.6" height="2.6"/><rect x="62.5" y="390" width="2.6" height="2.6"/>
 <!-- zoom tool -->
 <circle cx="23" cy="432" r="7.5"/>
 <path d="M28.5,437.5 L32.5,441.5" stroke-width="1.8"/>
 <path d="M22,428 Q26,428.5 26,432" stroke-width="1.6"/>
</g>
<!-- selection mode buttons -->
<rect x="18.5" y="455.5" width="43" height="65" fill="none" stroke="#3a3e42"/>
<rect x="19" y="456" width="42" height="31" fill="#4a6c97"/>
<g>
 <rect x="22.5" y="461.5" width="23" height="22" fill="#ffc400" stroke="#d07818"/>
 <rect x="24" y="463" width="20" height="19" fill="#ffe000"/>
 <circle cx="28.6" cy="468" r="3.8" fill="#ee3a10" stroke="#a01000" stroke-width="0.8"/>
 <path d="M30.5,473 L34.5,481.5 H26.5 Z" fill="#40e040" stroke="#108010" stroke-width="0.8"/>
 <rect x="34" y="458" width="24" height="18.5" fill="#fff" stroke="#000" stroke-dasharray="1.6 1.4"/>
 <rect x="40.5" y="463" width="11.5" height="8.5" fill="#88c0f8" stroke="#2266dd"/>
</g>
<g>
 <rect x="22.5" y="493.5" width="23" height="22" fill="#ffc400" stroke="#d07818"/>
 <rect x="24" y="495" width="20" height="19" fill="#ffe000"/>
 <circle cx="28.6" cy="500" r="3.8" fill="#ee3a10" stroke="#a01000" stroke-width="0.8"/>
 <path d="M30.5,505 L34.5,513.5 H26.5 Z" fill="#40e040" stroke="#108010" stroke-width="0.8"/>
 <rect x="34" y="490" width="24" height="18.5" fill="none" stroke="#000" stroke-dasharray="1.6 1.4"/>
 <rect x="40.5" y="495" width="11.5" height="8.5" fill="#88c0f8" stroke="#2266dd"/>
</g>
</svg>

<svg class="a" style="left:0;top:0;will-change:transform" width="1920" height="1080" viewBox="0 0 1920 1080">
<rect x="206" y="945" width="25" height="25" fill="#000000"/>
<rect x="206" y="971" width="25" height="25" fill="#ffffff"/>
<rect x="232" y="945" width="25" height="25" fill="#808080"/>
<rect x="232" y="971" width="25" height="25" fill="#c0c0c0"/>
<rect x="258" y="945" width="25" height="25" fill="#ff0000"/>
<rect x="258" y="971" width="25" height="25" fill="#800000"/>
<rect x="284" y="945" width="25" height="25" fill="#ff8000"/>
<rect x="284" y="971" width="25" height="25" fill="#804000"/>
<rect x="310" y="945" width="25" height="25" fill="#ffff00"/>
<rect x="310" y="971" width="25" height="25" fill="#808000"/>
<rect x="336" y="945" width="25" height="25" fill="#00ff00"/>
<rect x="336" y="971" width="25" height="25" fill="#008000"/>
<rect x="362" y="945" width="25" height="25" fill="#00ffff"/>
<rect x="362" y="971" width="25" height="25" fill="#008080"/>
<rect x="388" y="945" width="25" height="25" fill="#0000ff"/>
<rect x="388" y="971" width="25" height="25" fill="#000080"/>
<rect x="414" y="945" width="25" height="25" fill="#ff00ff"/>
<rect x="414" y="971" width="25" height="25" fill="#800080"/>
<rect x="440" y="945" width="25" height="25" fill="#ff8080"/>
<rect x="440" y="971" width="25" height="25" fill="#8080ff"/>
<rect x="466" y="945" width="25" height="25" fill="#80ff80"/>
<rect x="466" y="971" width="25" height="25" fill="#ffff80"/>
<rect x="86" y="950" width="50" height="50" fill="#fff"/>
<rect x="96" y="950" width="10" height="10" fill="#dedede"/>
<rect x="116" y="950" width="10" height="10" fill="#dedede"/>
<rect x="86" y="960" width="10" height="10" fill="#dedede"/>
<rect x="106" y="960" width="10" height="10" fill="#dedede"/>
<rect x="126" y="960" width="10" height="10" fill="#dedede"/>
<rect x="96" y="970" width="10" height="10" fill="#dedede"/>
<rect x="116" y="970" width="10" height="10" fill="#dedede"/>
<rect x="86" y="980" width="10" height="10" fill="#dedede"/>
<rect x="106" y="980" width="10" height="10" fill="#dedede"/>
<rect x="126" y="980" width="10" height="10" fill="#dedede"/>
<rect x="96" y="990" width="10" height="10" fill="#dedede"/>
<rect x="116" y="990" width="10" height="10" fill="#dedede"/>
<rect x="102" y="966" width="25.5" height="25.5" fill="#fff" stroke="#2a2e32" stroke-width="1.6"/>
<rect x="93" y="957" width="25.5" height="25.5" fill="#000" stroke="#3c434a" stroke-width="1.6"/>
<path d="M121,954 L125.5,950 V958 Z" fill="#000"/><path d="M125,954 H129.5 Q131.5,954 131.5,956 V959" fill="none" stroke="#000" stroke-width="1.1"/>
<path d="M127.5,959 H135.5 L131.5,963.5 Z" fill="#000"/>
<rect x="174" y="946" width="26" height="26" fill="#fff"/>
<rect x="177.71" y="946.00" width="3.72" height="3.72" fill="#d8d8d8"/>
<rect x="185.14" y="946.00" width="3.72" height="3.72" fill="#d8d8d8"/>
<rect x="192.57" y="946.00" width="3.72" height="3.72" fill="#d8d8d8"/>
<rect x="174.00" y="949.71" width="3.72" height="3.72" fill="#d8d8d8"/>
<rect x="181.43" y="949.71" width="3.72" height="3.72" fill="#d8d8d8"/>
<rect x="188.86" y="949.71" width="3.72" height="3.72" fill="#d8d8d8"/>
<rect x="196.28" y="949.71" width="3.72" height="3.72" fill="#d8d8d8"/>
<rect x="177.71" y="953.43" width="3.72" height="3.72" fill="#d8d8d8"/>
<rect x="185.14" y="953.43" width="3.72" height="3.72" fill="#d8d8d8"/>
<rect x="192.57" y="953.43" width="3.72" height="3.72" fill="#d8d8d8"/>
<rect x="174.00" y="957.14" width="3.72" height="3.72" fill="#d8d8d8"/>
<rect x="181.43" y="957.14" width="3.72" height="3.72" fill="#d8d8d8"/>
<rect x="188.86" y="957.14" width="3.72" height="3.72" fill="#d8d8d8"/>
<rect x="196.28" y="957.14" width="3.72" height="3.72" fill="#d8d8d8"/>
<rect x="177.71" y="960.86" width="3.72" height="3.72" fill="#d8d8d8"/>
<rect x="185.14" y="960.86" width="3.72" height="3.72" fill="#d8d8d8"/>
<rect x="192.57" y="960.86" width="3.72" height="3.72" fill="#d8d8d8"/>
<rect x="174.00" y="964.57" width="3.72" height="3.72" fill="#d8d8d8"/>
<rect x="181.43" y="964.57" width="3.72" height="3.72" fill="#d8d8d8"/>
<rect x="188.86" y="964.57" width="3.72" height="3.72" fill="#d8d8d8"/>
<rect x="196.28" y="964.57" width="3.72" height="3.72" fill="#d8d8d8"/>
<rect x="177.71" y="968.28" width="3.72" height="3.72" fill="#d8d8d8"/>
<rect x="185.14" y="968.28" width="3.72" height="3.72" fill="#d8d8d8"/>
<rect x="192.57" y="968.28" width="3.72" height="3.72" fill="#d8d8d8"/>
<path d="M186.5,947 L176.5,967 L186.5,971.5 L196.5,967 Z" fill="#7aaaf0" stroke="#2a60d0" stroke-width="0.9"/>
<path d="M186.5,947 V971.5 M176.5,967 L186.5,961.5 L196.5,967" fill="none" stroke="#2a60d0" stroke-width="0.9"/>
<path d="M555,970.5 L570.5,955 H593 L577.5,970.5 Z" fill="#b80000"/>
<path d="M577.5,970.5 L593,955 V978 L577.5,993.5 Z" fill="#0000c0"/>
<rect x="555" y="970.5" width="22.5" height="23" fill="#00c000"/>
</svg>
<svg class="a" style="left:0;top:0;will-change:transform" width="1920" height="1080" viewBox="0 0 1920 1080">
<!-- task buttons -->
<g fill="#ffffff" fill-opacity="0.13">
 <rect x="45" y="1040" width="46" height="40"/>
 <rect x="141" y="1040" width="46" height="40"/>
 <rect x="189" y="1040" width="46" height="40"/>
 <rect x="237" y="1040" width="46" height="40"/>
 <rect x="285" y="1040" width="46" height="40"/>
 <rect x="333" y="1040" width="46" height="40" fill="#6c9ad8" fill-opacity="0.35"/>
 <rect x="381" y="1040" width="46" height="40"/>
</g>
<g fill="#ffffff" fill-opacity="0.22">
 <rect x="45" y="1040" width="46" height="3"/>
 <rect x="189" y="1040" width="46" height="3"/>
 <rect x="237" y="1040" width="46" height="3"/>
 <rect x="285" y="1040" width="46" height="3"/>
 <rect x="381" y="1040" width="46" height="3"/>
</g>
<rect x="333" y="1040" width="46" height="3" fill="#5a90d8"/>
<!-- KDE logo -->
<g fill="#6399d6">
 <rect x="21" y="1044.3" width="5" height="22"/>
 <polygon points="25.5,1055.5 33.3,1044.3 38.3,1045.7 29.5,1058"/>
 <polygon points="27.5,1054.5 38.7,1064.3 33,1066.3 25,1058.5"/>
 <path d="M19.5,1052.6 A9.6,9.6 0 1 0 30.5,1068.2" fill="none" stroke="#6399d6" stroke-width="1.8"/>
 <polygon points="15.64,1065.97 11.68,1069.93 15.07,1073.32 19.03,1069.36"/><polygon points="14.70,1058.90 9.10,1058.90 9.10,1063.70 14.70,1063.70"/><polygon points="19.03,1053.24 15.07,1049.28 11.68,1052.67 15.64,1056.63"/><polygon points="26.10,1052.30 25.60,1046.70 21.80,1046.70 21.30,1052.30"/><polygon points="31.76,1056.63 35.72,1052.67 32.33,1049.28 28.37,1053.24"/>
</g>
<!-- terminal -->
<rect x="54" y="1046" width="28" height="28" rx="1" fill="#3a3e3c"/>
<path d="M54,1046 H82 V1074 L62,1054 Z" fill="#4a4f4d" opacity="0.5"/>
<path d="M65,1053 L71,1060 L65,1067" fill="none" stroke="#e8e8e8" stroke-width="1.3"/>
<!-- dolphin folder -->
<path d="M102,1047 H111 L113,1049 H130 V1073 H102 Z" fill="#3e6490"/>
<rect x="103" y="1050.5" width="26" height="6" fill="#f4f4f4"/>
<path d="M101,1058 L130,1057 L130.5,1073 H102 Z" fill="#5a80ac"/>
<path d="M107,1073 Q114,1062 126,1061 Q120,1066 118,1073 Z" fill="#9ab8d6"/>
<!-- firefox -->
<defs>
 <linearGradient id="ffg" x1="0.9" y1="0.1" x2="0.2" y2="1"><stop offset="0" stop-color="#ffe84a"/><stop offset="0.45" stop-color="#ff9a2a"/><stop offset="0.75" stop-color="#ff4a3a"/><stop offset="1" stop-color="#ff1a7a"/></linearGradient>
 <radialGradient id="ffp" cx="0.35" cy="0.7" r="0.8"><stop offset="0" stop-color="#6a60e8"/><stop offset="1" stop-color="#b040e8"/></radialGradient>
</defs>
<path d="M157,1049 L159.5,1052 Q161,1051 163,1051 L163,1052 Q168,1047 168.3,1044 Q177,1051 178.5,1059 A14.7,14.7 0 1 1 150,1057 Q151,1052 154.5,1048.8 L155.5,1051.5 Z" fill="url(#ffg)"/>
<circle cx="164" cy="1062" r="6.3" fill="url(#ffp)"/>
<path d="M151.5,1057 Q155,1054 160,1055 Q162,1056 164,1057 Q160,1058 158,1061 L156,1059 Q153,1058.5 151.5,1057 Z" fill="#ffb020"/>
<!-- discord -->
<circle cx="212" cy="1060" r="16" fill="#5865f2"/>
<path d="M202.5,1053 Q207,1050 209.5,1050.5 L210.5,1052 Q212,1051.7 213.5,1052 L214.5,1050.5 Q217,1050 221.5,1053 Q224.5,1059 224,1065.5 Q221,1068 218,1068.5 L216.5,1066.5 L218.5,1065.5 Q212,1068 205.5,1065.5 L207.5,1066.5 L206,1068.5 Q203,1068 200,1065.5 Q199.5,1059 202.5,1053 Z" fill="#fff"/>
<ellipse cx="208" cy="1060.5" rx="2" ry="2.2" fill="#5865f2"/>
<ellipse cx="216" cy="1060.5" rx="2" ry="2.2" fill="#5865f2"/>
<!-- steam -->
<defs><linearGradient id="stg" x1="0" y1="0" x2="0" y2="1"><stop offset="0" stop-color="#111d3c"/><stop offset="1" stop-color="#1a6ea8"/></linearGradient></defs>
<circle cx="260" cy="1060" r="14.8" fill="url(#stg)"/>
<path d="M265,1050 A5.7,5.7 0 0 1 270.5,1057 L262,1066 A3.6,3.6 0 0 1 255,1068.8 L246.5,1065 L246,1058.6 L254.5,1062.3 L260,1055 A5.7,5.7 0 0 1 265,1050 Z" fill="#e8eaf0"/>
<circle cx="265" cy="1055.7" r="3.6" fill="none" stroke="#1a2a5a" stroke-width="1"/>
<circle cx="265" cy="1055.7" r="2.6" fill="#c8cde0"/>
<path d="M255.5,1062.5 A3,3 0 0 1 257.5,1068" fill="none" stroke="#1a3a6a" stroke-width="0.9"/>
<!-- spotify -->
<circle cx="308" cy="1060" r="14.2" fill="#1ed760"/>
<path d="M299,1055 Q308,1051 318,1056 M300.5,1059.5 Q308,1056.5 316.5,1060.5 M301.5,1064 Q308,1061.5 315,1064.5" fill="none" stroke="#111" stroke-width="2.2" stroke-linecap="round"/>
<!-- kolourpaint palette -->
<defs><linearGradient id="kpg" x1="0" y1="0" x2="1" y2="0.2"><stop offset="0" stop-color="#c03090"/><stop offset="0.2" stop-color="#d02818"/><stop offset="0.4" stop-color="#f07a30"/><stop offset="0.55" stop-color="#f0b030"/><stop offset="0.72" stop-color="#80c840"/><stop offset="0.86" stop-color="#30b0a0"/><stop offset="1" stop-color="#2a4a6a"/></linearGradient></defs>
<path d="M344.3,1053 Q347,1048 354.7,1046.7 Q364,1047 367.5,1054 Q369.5,1059 368.3,1062 Q367,1066 364.3,1068.7 Q360,1073.5 355.3,1073.3 Q350,1073 349.3,1068 Q349,1064 351,1060.7 Q346,1058 344.3,1053 Z" fill="#b08c66"/>
<path d="M344.3,1053 Q347,1048 354.7,1046.7 Q364,1047 367.5,1054 Q369.5,1059 368.3,1062 L363,1063 L361,1058 L352,1058 Q346.5,1057 344.3,1053 Z" fill="url(#kpg)"/>
<rect x="352" y="1054" width="6" height="4" fill="#f4c8a8" opacity="0.8"/>
<rect x="358" y="1058" width="3.5" height="5" fill="#f4fce8"/>
<path d="M364,1063 L368,1058 L368,1064 L364.5,1068 Z" fill="#6aa8e0"/>
<circle cx="355.2" cy="1067" r="2.5" fill="#4e70a0"/>
<!-- spectacle -->
<rect x="388" y="1047" width="32" height="23" fill="#2a2e32"/>
<rect x="389.5" y="1048.5" width="29" height="19.5" fill="#2a9aaa"/>
<path d="M404,1048.5 H418.5 V1068 H404 L410,1058 Z" fill="#c0407c"/>
<path d="M389.5,1068 L401,1058 L410,1068 Z" fill="#3e5a5a"/>
<rect x="398" y="1053" width="12" height="8.5" fill="#f0f0f0"/>
<circle cx="404" cy="1057.3" r="2.5" fill="none" stroke="#d04080" stroke-width="1"/>
<rect x="397" y="1072" width="14" height="1.2" fill="#bbb"/>
<!-- tray -->
<g fill="#e8e8e8">
 <path d="M1556,1054 Q1559,1052 1561,1052.5 L1561.6,1053.5 H1566.4 L1567,1052.5 Q1569,1052 1572,1054 Q1574,1058 1573.6,1063 Q1571.5,1064.8 1569,1065.3 L1568,1064 H1560 L1559,1065.3 Q1556.5,1064.8 1554.4,1063 Q1554,1058 1556,1054 Z"/>
 <ellipse cx="1560.5" cy="1059" rx="1.6" ry="1.8" fill="#2a3850"/><ellipse cx="1567.5" cy="1059" rx="1.6" ry="1.8" fill="#2a3850"/>
 <circle cx="1571" cy="1053.5" r="3.2" fill="#e03030"/>
 <circle cx="1594" cy="1059.5" r="9" fill="#d8d8d8"/>
 <path d="M1619.5,1052 H1628.5 V1054 H1630 V1067.5 H1618 V1054 H1619.5 Z" fill="#e8e8e8"/>
</g>
<g fill="none" stroke="#e8e8e8" stroke-width="1.3">
 <circle cx="1597" cy="1057" r="2.8" stroke="#555" stroke-width="1.5"/>
 <path d="M1620.5,1058 H1627 M1620.5,1061 H1627 M1620.5,1064 H1624" stroke="#333"/>
 <circle cx="1654" cy="1059.5" r="7.8"/>
 <path d="M1652,1056 L1657.5,1059.5 L1652,1063 Z" fill="#e8e8e8" stroke="none"/>
 <path d="M1681,1054 L1686,1052.5 V1066.5 L1681,1064 Z" fill="#e8e8e8"/>
 <path d="M1678,1056 H1681 V1063 H1678 Z" fill="#e8e8e8"/>
 <path d="M1688.5,1055 Q1691,1059.5 1688.5,1064 M1690.5,1053 Q1694,1059.5 1690.5,1066" stroke="#f0a030"/>
 <circle cx="1714" cy="1059.5" r="3.8"/>
 <path d="M1714,1052 V1054 M1714,1065 V1067 M1706.5,1059.5 H1708.5 M1719.5,1059.5 H1721.5 M1709,1054.5 L1710.5,1056 M1717.5,1063 L1719,1064.5 M1719,1054.5 L1717.5,1056 M1710.5,1063 L1709,1064.5"/>
 <rect x="1738.5" y="1052.5" width="14" height="10"/>
 <rect x="1736.5" y="1052" width="3" height="6" fill="#2a3850"/>
 <path d="M1742,1066 H1750 M1746,1062.5 V1066 M1738,1058 V1064 Q1738,1066 1740,1066"/>
 <path d="M1767,1066 L1771,1062 M1768,1060 Q1774,1050 1781,1051 Q1782,1058 1772,1064 Z M1767,1064 Q1766,1067 1766.5,1067.5 Q1767,1068 1770,1067"/>
 <circle cx="1776" cy="1056" r="1.6"/>
 <path d="M1795.5,1063 L1802,1056.5 L1808.5,1063" stroke-width="1.5"/>
 <rect x="1888.5" y="1052.5" width="15" height="15"/>
 <path d="M1889,1064 H1903"/>
</g>
<text x="1822" y="1066" font-family="Liberation Mono" font-style="italic" font-size="17" fill="#e8e8e8" letter-spacing="-0.3">11:41</text>
</svg>

</body></html>
